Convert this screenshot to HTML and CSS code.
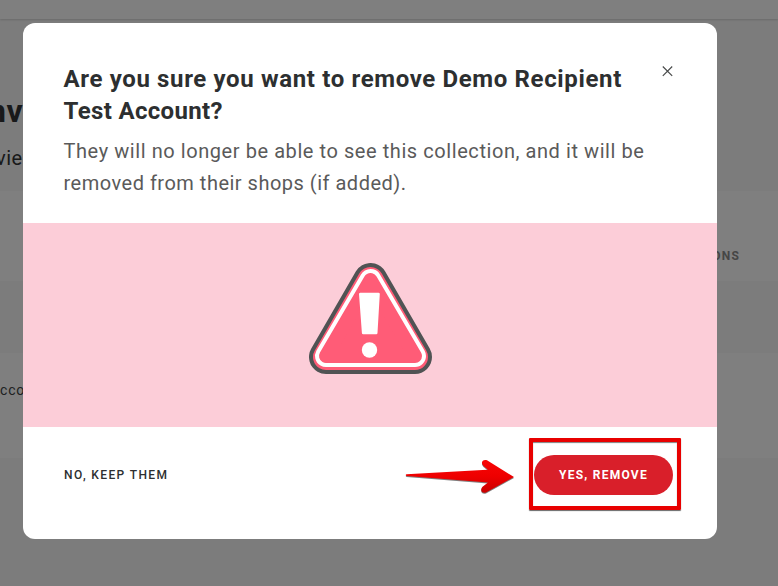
FILE: index.html
```html
<!DOCTYPE html>
<html lang="en">
<head>
    <meta charset="UTF-8">
    <meta name="viewport" content="width=device-width, initial-scale=1.0">
    <title>Remove Recipient</title>
    <link rel="stylesheet" href="styles.css">
</head>
<body>
    <div class="page">
        <div class="navbar"></div>
        <div class="intro">
            <h1>nv</h1>
            <p>view</p>
        </div>
        <div class="table-head">ACTIONS</div>
        <div class="table-gap"></div>
        <div class="table-row">ccount</div>
    </div>

    <div class="overlay">
        <div class="modal">
            <div class="modal-header">
                <div class="modal-text">
                    <h2>Are you sure you want to remove Demo Recipient<br><span class="second-line">Test Account?</span></h2>
                    <p>They will no longer be able to see this collection, and it will be<br><span class="second-line">removed from their shops (if added).</span></p>
                </div>
                <button type="button" class="close" aria-label="Close">
                    <svg width="11" height="11" viewBox="0 0 11 11">
                        <path d="M.8.5l9.400 9.400M10.200.5L.8 9.900" fill="none" stroke="#4a4c4c" stroke-width="1.2"/>
                    </svg>
                </button>
            </div>
            <div class="modal-banner">
                <svg width="123" height="111" viewBox="309 263 123 111">
                    <g stroke-linejoin="round">
                        <path d="M370.5 280L326 357h89z" fill="#505354" stroke="#505354" stroke-width="34"/>
                        <path d="M370.5 280L326 357h89z" fill="#ff5c77" stroke="#ff5c77" stroke-width="26"/>
                        <path d="M370.5 280L326 356h89z" fill="#fff" stroke="#fff" stroke-width="22"/>
                        <path d="M370.5 280L326 356h89z" fill="#ff5c77" stroke="#ff5c77" stroke-width="14"/>
                        <path d="M360.3 294h18.2l-2.3 39h-13z" fill="#fff" stroke="#fff" stroke-width="2.6"/>
                    </g>
                    <circle cx="369.5" cy="350" r="7.7" fill="#fff"/>
                </svg>
            </div>
            <div class="modal-footer">
                <button type="button" class="btn-text">NO, KEEP THEM</button>
                <div class="action">
                    <svg class="arrow" width="112" height="38" viewBox="404 458 112 38">
                        <defs>
                            <linearGradient id="red" x1="0" y1="0" x2="0" y2="1">
                                <stop offset="0" stop-color="#f80505"/>
                                <stop offset=".5" stop-color="#ee0000"/>
                                <stop offset="1" stop-color="#c90000"/>
                            </linearGradient>
                        </defs>
                        <path d="M406.600 474.200L482.500 470L488 469.800L483.500 466C480 462.500 483 458.800 487 460.300L514 477L486 492.500C482 494 479.500 490 482.500 486.800L488 482.600L406.600 476.100C405.500 475.800 405.500 474.400 406.600 474.200z" fill="url(#red)"/>
                    </svg>
                    <div class="highlight">
                        <button type="button" class="btn">YES, REMOVE</button>
                    </div>
                </div>
            </div>
        </div>
    </div>
</body>
</html>
```
FILE: styles.css
```css
* {
    box-sizing: border-box;
}
body {
    margin: 0;
    height: 586px;
    overflow: hidden;
    font-family: Roboto, "Liberation Sans", sans-serif;
    background: #f8f8f8;
}
h1, h2, p {
    margin: 0;
}
button {
    padding: 0;
    border: none;
    background: none;
    font-family: inherit;
}
.navbar {
    height: 19px;
    background: #fff;
    box-shadow: 0 1px 2px rgba(0, 0, 0, 0.15);
}
.intro {
    height: 172px;
    padding-top: 72px;
    color: #303334;
}
.intro h1 {
    margin-left: -12px;
    font-size: 32px;
    line-height: 40px;
    letter-spacing: 0.5px;
}
.intro p {
    margin: 14px 0 0 -4px;
    font-size: 20px;
    line-height: 26px;
    letter-spacing: 0.5px;
}
.table-head {
    height: 90px;
    padding: 57px 38px 0 0;
    text-align: right;
    font-size: 12px;
    font-weight: bold;
    line-height: 16px;
    letter-spacing: 1.2px;
    color: #8c8c8c;
    background: #fff;
}
.table-gap {
    height: 72px;
}
.table-row {
    height: 105px;
    padding-top: 27px;
    font-size: 14px;
    line-height: 20px;
    letter-spacing: 0.8px;
    color: #404344;
    background: #fff;
}
.overlay {
    position: absolute;
    top: 0;
    left: 0;
    width: 100%;
    height: 586px;
    padding: 23px;
    background: rgba(0, 0, 0, 0.5);
}
.modal {
    width: 694px;
    height: 516px;
    border-radius: 12px;
    overflow: hidden;
    background: #fff;
}
.modal-header {
    display: flex;
    justify-content: space-between;
    height: 200px;
    padding: 40px 44px 0 40.5px;
}
.modal-text {
    white-space: nowrap;
}
.modal-text h2 {
    font-size: 24px;
    font-weight: bold;
    line-height: 32px;
    letter-spacing: 0.64px;
    color: #2d2f30;
}
.modal-text h2 .second-line {
    letter-spacing: 0.35px;
}
.modal-text p {
    margin-top: 8px;
    font-size: 20px;
    line-height: 32px;
    letter-spacing: 0.57px;
    color: #5a5a5a;
}
.modal-text p .second-line {
    letter-spacing: 0.5px;
}
.close {
    width: 11px;
    height: 11px;
    margin-top: 3px;
}
.close svg {
    display: block;
}
.modal-banner {
    display: flex;
    justify-content: center;
    align-items: center;
    height: 204px;
    padding-bottom: 13px;
    background: #fccdd8;
}
.modal-footer {
    display: flex;
    justify-content: space-between;
    align-items: flex-start;
    padding: 11px 36px 0 41px;
}
.btn-text {
    margin-top: 29px;
    font-size: 12px;
    font-weight: 500;
    line-height: 16px;
    letter-spacing: 1.38px;
    color: #2d2f30;
}
.action {
    display: flex;
    align-items: flex-start;
    gap: 13px;
}
.arrow {
    margin-top: 20px;
    filter: drop-shadow(0 1px 0.5px rgba(0, 0, 0, 0.5));
}
.highlight {
    width: 152px;
    height: 72px;
    padding: 13px 0 0 1px;
    border: 4px solid #e80000;
    border-radius: 1px;
    box-shadow: 0 1px 1px rgba(0, 0, 0, 0.6), inset 0 1px 1px rgba(0, 0, 0, 0.5);
}
.btn {
    display: block;
    width: 139px;
    height: 40px;
    border-radius: 20px;
    font-size: 12px;
    font-weight: bold;
    letter-spacing: 1.25px;
    color: #fff;
    background: #d91f2a;
}
```
